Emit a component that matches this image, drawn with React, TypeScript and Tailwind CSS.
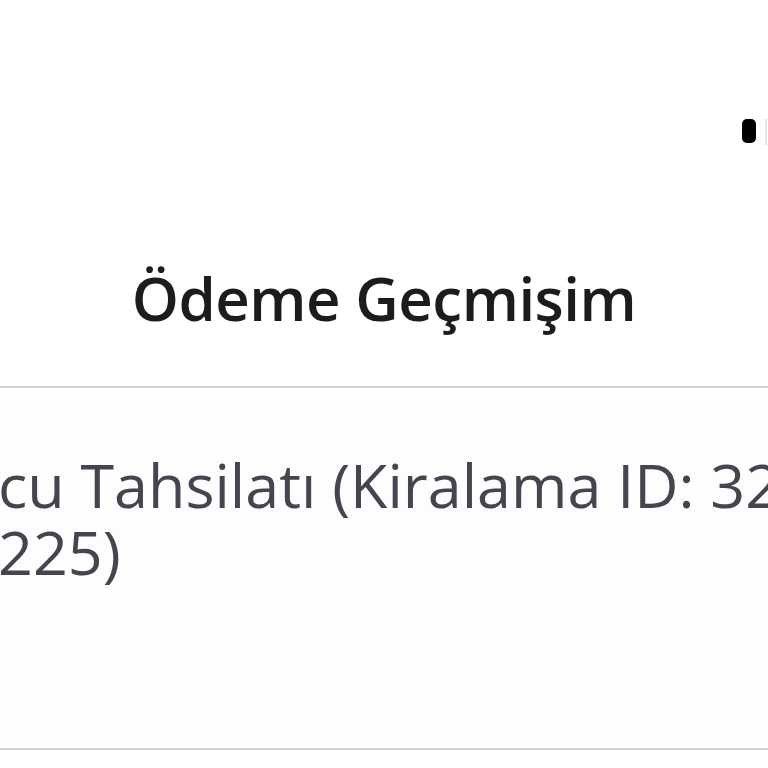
export default function App() {
  return (
    <div
      className="w-[768px] h-[768px] overflow-hidden bg-white"
      style={{ fontFamily: '"Open Sans", "Noto Sans", sans-serif' }}
    >
      {/* status bar fragment */}
      <div className="h-[119px]" />
      <div className="flex justify-end items-start h-[267px]">
        <div className="w-[14px] h-[24px] rounded-[5px] bg-black mr-[9px]" />
        <div className="w-[2px] h-[26px] bg-[#e6e6e6] mr-[1px]" />
      </div>

      {/* header */}
      <div className="-mt-[118px] h-[118px] flex justify-center">
        <h1 className="text-[60px] leading-none font-semibold text-[#1c1c1c] tracking-[-0.5px]">
          Ödeme Geçmişim
        </h1>
      </div>
      <div className="h-[2px] bg-[#d4d4d4]" />

      {/* row */}
      <div className="h-[360px] bg-[#fdfdfd] overflow-hidden">
        <div className="pt-[63px] -ml-[2px] text-[#45454f] text-[61px] leading-[67px] whitespace-nowrap">
          <div>cu Tahsilatı (Kiralama ID: 32</div>
          <div>225)</div>
        </div>
      </div>
      <div className="h-[2px] bg-[#d4d4d4]" />
    </div>
  )
}
